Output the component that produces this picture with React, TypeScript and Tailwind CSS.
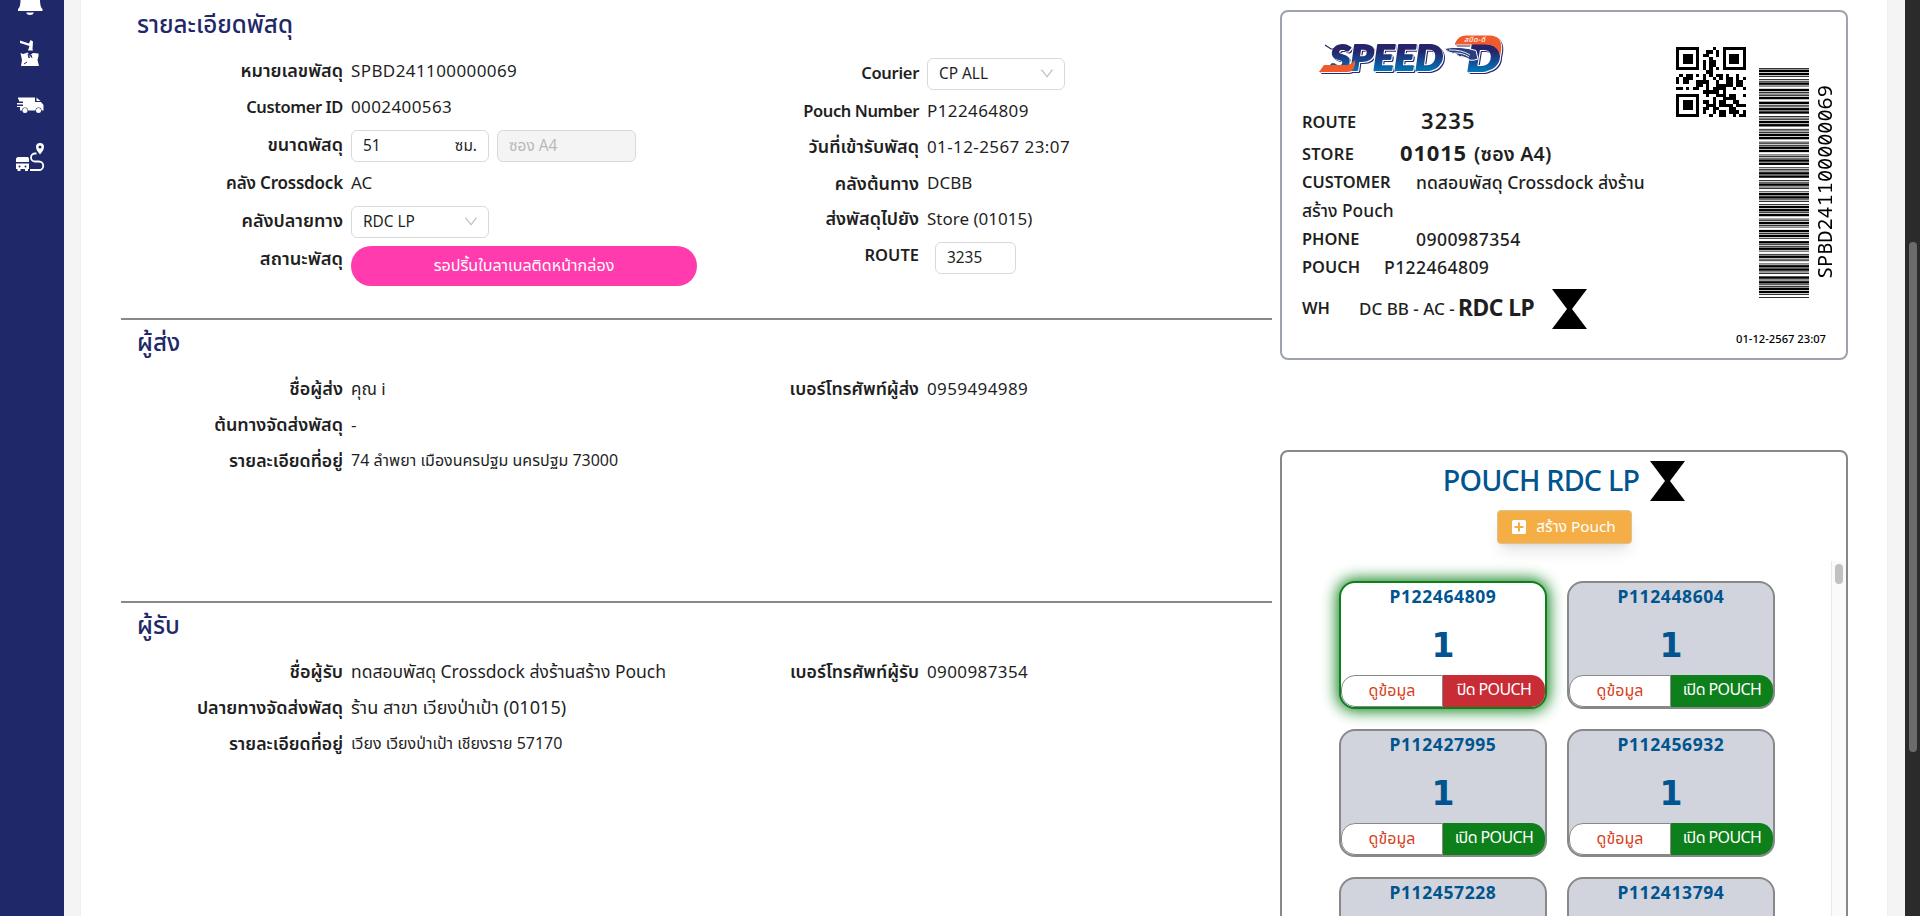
import React from "react";

const QR = [
  "#######....#..#######",
  "#.....#..##.#.#.....#",
  "#.###.#.##..#.#.###.#",
  "#.###.#...#...#.###.#",
  "#.###.#.#.##..#.###.#",
  "#.....#.#.##..#.....#",
  "#######.#.#.#.#######",
  ".........##..........",
  ".#.##.#.#.#.##.#..#..",
  "#.###...#..#.#.##.#.#",
  "#.##..####..#..##.##.",
  "......##.#..#####.##.",
  "##.#.##..#.####..#..#",
  "........#####.#......",
  "#######..#..###.##..#",
  "#.....#....#..####...",
  "#.###.#.##.#.##..##..",
  "#.###.#..###.####.###",
  "#.###.#.##.##...##...",
  "#.....#.#..#.##.###.#",
  "#######...#..##..#.##",
];

// Code 39: alternating bar / space, capital letter = wide element
const CODE39: Record<string, string> = {
  "*": "bWbwBwBwb", S: "bwBwbwBWb", P: "bwBwBwbWb", B: "bwBwbWbwB", D: "bwbwBWbwB",
  "0": "bwbWBwBwb", "1": "BwbWbwbwB", "2": "bwBWbwbwB", "4": "bwbWBwbwB", "6": "bwBWBwbwb", "9": "bwBWbwBwb",
};

function QrCode() {
  return (
    <svg width="70" height="70" viewBox="0 0 21 21" shapeRendering="crispEdges">
      {QR.flatMap((row, y) =>
        row.split("").map((c, x) => (c === "#" ? <rect key={`${x}-${y}`} x={x} y={y} width="1" height="1" /> : null)),
      )}
    </svg>
  );
}

function Barcode() {
  let pos = 0;
  const bars: React.ReactNode[] = [];
  for (const ch of "*SPBD241100000069*") {
    for (const e of CODE39[ch] + "w") {
      const w = e === "B" || e === "W" ? 3 : 1;
      if (e.toLowerCase() === "b") bars.push(<rect key={pos} x="0" y={287 - pos - w} width="50" height={w} />);
      pos += w;
    }
  }
  return (
    <svg width="50" height="230" viewBox="0 0 50 287" preserveAspectRatio="none">
      {bars}
    </svg>
  );
}

function Hourglass({ className = "" }: { className?: string }) {
  return (
    <svg width="35" height="40" viewBox="0 0 35 40" className={className}>
      <path d="M0 0H35L20 20L35 40H0L15 20Z" />
    </svg>
  );
}

function Chevron() {
  return (
    <svg width="12" height="9" viewBox="0 0 12 9" fill="none" stroke="#bfbfbf" strokeWidth="1.3">
      <path d="M0.5 0.7L6 7.8L11.5 0.7" />
    </svg>
  );
}

function Logo() {
  return (
    <svg width="192" height="46" viewBox="0 0 192 46" className="overflow-visible">
      <defs>
        <linearGradient id="blue" gradientUnits="userSpaceOnUse" x1="0" y1="12" x2="0" y2="38">
          <stop offset="0.2" stopColor="#26246b" />
          <stop offset="1" stopColor="#0079bd" />
        </linearGradient>
      </defs>
      <g className="[filter:drop-shadow(1.5px_1.5px_0_#fff)_drop-shadow(-1px_-1px_0_#fff)_drop-shadow(1.2px_1.4px_0_#2b2667)]">
        <g fontFamily="Lato" fontWeight="900" fontStyle="italic" stroke="url(#blue)" strokeWidth="1.8" strokeLinejoin="round" fill="url(#blue)">
          <text x="14" y="36" fontSize="35" textLength="113" lengthAdjust="spacingAndGlyphs">SPEED</text>
          <text x="151" y="36.500" fontSize="36" textLength="33" lengthAdjust="spacingAndGlyphs">D</text>
        </g>
        <path d="M3 38L8 31H30Q35 31 39 26Q40 38 31 38Z" fill="#f15a2b" />
        <path d="M139 9.500Q142 1.500 150 1.500H174Q187 2 185 17L184 22Q182 10.500 170 10.500H139Z" fill="#f15a2b" />
      </g>
      <path d="M9 11L15 15H24" fill="none" stroke="#2b2667" strokeWidth="1.2" />
      <text x="148" y="8" fontFamily="Noto Sans Thai, sans-serif" fontSize="7" fontStyle="italic" fill="#fff" textLength="21">สปีด-ดี</text>
      <path d="M128 14.500Q145 11.500 160 16.500L162 25Q154 28 150 24Q142 23 140 20Q132 19 128 14.500Z" fill="#2c3f7d" stroke="#fff" strokeWidth="1" />
      <path d="M133 16Q146 15.500 154 21M138 19Q147 18.500 153 23M145 22L153 25" fill="none" stroke="#fff" strokeWidth="0.9" />
    </svg>
  );
}

function Sidebar() {
  return (
    <aside className="w-16 shrink-0 bg-[#1f2868]">
      <svg width="64" height="180" viewBox="0 0 64 180" fill="#fff">
        <path d="M20 0H40Q40 7 42.500 9V11H18V9Q20.500 7 20.500 0Z" />
        <path d="M26 12.500H34Q33 15 30 15T26 12.500Z" />
        <path d="M20 40.500L29 43.500L30.500 40L33 41.500L32.500 49L33 50.500H28L29.500 46L20 43Z" />
        <path d="M20.500 53L23 54L28 52.500L29 56L33 53L38.500 53.500V56L37.500 60L39 66H21L22 60Z" />
        <path d="M28 54L29 58L31 55L32 58" fill="none" stroke="#1f2868" />
        <path d="M24 64L27 62" stroke="#1f2868" />
        <path d="M18 97.500H35V102H41L43.500 105V110.500H41.500A3 3 0 0 0 35.500 110.500H28A3 3 0 0 0 22 110.500H20V107H17V106H23V104.500H17V103H23V101.500H19V99.500H18Z" />
        <path d="M36.500 97.500L40.500 101H36.500Z" />
        <circle cx="25" cy="110.500" r="2.500" />
        <circle cx="38.500" cy="110.500" r="2.500" />
        <path d="M17.500 157H28L29 158.500V162H16V158.500ZM16 163.500H29V169H28V171H25V169H20.500V171H17.500V169H16Z" />
        <circle cx="19.500" cy="166.500" r="1" fill="#1f2868" />
        <circle cx="25.500" cy="166.500" r="1" fill="#1f2868" />
        <path d="M36.500 153.500H35A4 4 0 0 0 35 161.500H39A4 4 0 0 1 39 170H30" fill="none" stroke="#fff" strokeWidth="1.800" />
        <path fillRule="evenodd" d="M40 143A4 4 0 0 1 44 147Q44 150 40 154.500Q36 150 36 147A4 4 0 0 1 40 143ZM40 145.500A1.500 1.500 0 1 0 40 148.500A1.500 1.500 0 1 0 40 145.500Z" />
      </svg>
    </aside>
  );
}

interface RowProps {
  label: string;
  h: string;
  children: React.ReactNode;
  wide?: boolean;
  labelClass?: string;
}

function Row({ label, h, children, wide = false, labelClass = "pb-px text-[17.7px]" }: RowProps) {
  return (
    <div className={`flex items-center gap-2 ${h}`}>
      <div className={`${wide ? "w-[215px]" : "w-[222px]"} ${labelClass} shrink-0 text-right font-semibold whitespace-nowrap`}>{label}</div>
      <div className="flex items-center gap-2 text-[17px] whitespace-nowrap">{children}</div>
    </div>
  );
}

const latinLabel = "text-[16.5px] tracking-[-0.4px]";
const thaiLabel = "pb-0.5 text-[18px]";

function Num({ children }: { children: React.ReactNode }) {
  return <span className="tracking-[0.4px]">{children}</span>;
}

const box = "flex h-8 items-center justify-between rounded-md border border-[#d9d9d9] px-[11px] pb-px text-[15.4px]";

function Heading({ children }: { children: React.ReactNode }) {
  return <h2 className="h-9 pl-4 text-[24.2px] leading-[34px] font-medium text-[#1f2868]">{children}</h2>;
}

function Pouch({ id, active = false }: { id: string; active?: boolean }) {
  return (
    <div
      className={`flex h-32 flex-col items-center rounded-2xl border-2 text-[#00548f] ${
        active ? "border-[#0d801b] bg-white shadow-[0_0_15px_2px_#0d801b]" : "border-[#888] bg-[#d1d4dc]"
      }`}
    >
      <div className="h-7 text-[17.5px] leading-[27px] font-bold tracking-[0.6px]">{id}</div>
      <div className="min-h-0 flex-1 font-['DejaVu_Sans'] text-[33px] leading-[70px] font-bold">1</div>
      <div className="flex h-8 w-full shrink-0 text-base leading-[29px] whitespace-nowrap">
        <div className="w-1/2 rounded-l-[14px] border border-[#888] bg-white text-center leading-[28px] text-[#d6401a]">ดูข้อมูล</div>
        <div className={`w-1/2 rounded-r-[14px] text-center tracking-[-0.6px] text-white ${active ? "bg-[#c82d36]" : "bg-[#0d801b]"}`}>
          {active ? "ปิด POUCH" : "เปิด POUCH"}
        </div>
      </div>
    </div>
  );
}

function LabelCard() {
  return (
    <section className="flex h-[350px] rounded-lg border-2 border-[#9ca3af] text-[17.6px] font-medium whitespace-nowrap">
      <div className="w-[390px] pt-[22px] pl-5">
        <div className="h-[71px] pl-3.5">
          <Logo />
        </div>
        <div className="flex h-[34px] items-center">
          <span className="w-[119px] pt-px text-[16.4px] font-semibold">ROUTE</span>
          <span className="pb-[3px] text-[22px] font-semibold tracking-[1.1px]">3235</span>
        </div>
        <div className="flex h-[29px] items-center">
          <span className="w-[98px] pt-px text-[16.4px] font-semibold tracking-[0.3px]">STORE</span>
          <span className="pb-0.5 text-[22px] font-bold tracking-[0.8px]">01015</span>
          <span className="pl-[7px] text-[19.6px] font-semibold tracking-[0.2px]">(ซอง A4)</span>
        </div>
        <div className="flex h-7 items-center">
          <span className="w-[114px] text-[16.4px] font-semibold">CUSTOMER</span>
          <span>ทดสอบพัสดุ Crossdock ส่งร้าน</span>
        </div>
        <div className="h-7 text-[17.4px] leading-[29px]">สร้าง Pouch</div>
        <div className="flex h-7 items-center pt-0.5">
          <span className="w-[114px] text-[16.4px] font-semibold">PHONE</span>
          <Num>0900987354</Num>
        </div>
        <div className="flex h-7 items-center pt-0.5">
          <span className="w-[82px] text-[16.4px] font-semibold">POUCH</span>
          <Num>P122464809</Num>
        </div>
        <div className="flex h-[57px] items-center">
          <span className="w-[57px] text-[16.4px] font-semibold">WH</span>
          <span className="w-[95px] text-[17px]">DC BB - AC -</span>
          <span className="pl-1 text-[22.8px] font-bold tracking-[-0.5px]">RDC LP</span>
          <Hourglass className="ml-[18px]" />
        </div>
      </div>
      <div className="flex flex-1 flex-col items-end">
        <div className="flex h-[315px] gap-[13px] pr-[9px]">
          <div className="pt-[35px]"><QrCode /></div>
          <div className="pt-[56px]"><Barcode /></div>
          <div className="-ml-[11px] flex w-[26px] rotate-180 items-center justify-center pb-[26px] font-['Noto_Sans_Mono','DejaVu_Sans_Mono',monospace] text-[20.2px] font-normal text-black [writing-mode:vertical-rl]">
            SPBD241100000069
          </div>
        </div>
        <div className="pr-5 text-[11.2px] leading-6 text-black">01-12-2567 23:07</div>
      </div>
    </section>
  );
}

export default function App() {
  return (
    <div className="flex h-[916px] w-[1920px] overflow-hidden bg-[#f4f4f4] font-['Noto_Sans','Noto_Sans_Thai',sans-serif] text-[#1f1f1f]">
      <Sidebar />
      <main className="ml-[16px] flex w-[1808px] shrink-0 border-x border-[#efefef] bg-white pl-[40px]">
        <div className="w-[1151px] shrink-0">
          <div className="h-[318px] pt-[7px]">
            <Heading>รายละเอียดพัสดุ</Heading>
            <div className="mt-2.5 flex">
              <div className="w-[583px]">
                <Row label="หมายเลขพัสดุ" h="h-9" labelClass={thaiLabel}><Num>SPBD241100000069</Num></Row>
                <Row label="Customer ID" h="h-9" labelClass={latinLabel}><Num>0002400563</Num></Row>
                <Row label="ขนาดพัสดุ" h="h-[42px]" labelClass="pb-[3px] text-[18px]">
                  <div className={`${box} w-[138px]`}><span>51</span><span>ซม.</span></div>
                  <div className={`${box} w-[139px] bg-[#f4f4f4] text-[#b8b8b8]`}>ซอง A4</div>
                </Row>
                <Row label="คลัง Crossdock" h="h-8" labelClass="text-[17px] tracking-[-0.2px]">AC</Row>
                <Row label="คลังปลายทาง" h="h-[46px]" labelClass="pb-[3px] text-[18px]">
                  <div className={`${box} w-[138px]`}><span>RDC LP</span><Chevron /></div>
                </Row>
                <Row label="สถานะพัสดุ" h="h-[42px]" labelClass="pb-4 text-[18.300px]">
                  <div className="h-10 w-[346px] rounded-full bg-[#ff3bad] text-center text-[16.1px] leading-[38px] text-white">รอปริ้นใบลาเบลติดหน้ากล่อง</div>
                </Row>
              </div>
              <div>
                <Row wide label="Courier" h="h-[42px]" labelClass="pb-0.5 text-[16.5px] tracking-[-0.3px]">
                  <div className={`${box} w-[138px]`}><span>CP ALL</span><Chevron /></div>
                </Row>
                <Row wide label="Pouch Number" h="h-8" labelClass={latinLabel}><Num>P122464809</Num></Row>
                <Row wide label="วันที่เข้ารับพัสดุ" h="h-10" labelClass="pb-px text-[18px]"><Num>01-12-2567 23:07</Num></Row>
                <Row wide label="คลังต้นทาง" h="h-8" labelClass="text-[18px]">DCBB</Row>
                <Row wide label="ส่งพัสดุไปยัง" h="h-10" labelClass="pb-px text-[18px]">Store (01015)</Row>
                <Row wide label="ROUTE" h="h-8" labelClass="text-[16.5px]">
                  <div className={`${box} mt-1.5 ml-2 w-[81px]`}>3235</div>
                </Row>
              </div>
            </div>
          </div>
          <div className="h-[283px] border-t-2 border-[#888] pt-[5px]">
            <Heading>ผู้ส่ง</Heading>
            <div className="mt-2.5 flex">
              <div className="w-[583px]">
                <Row label="ชื่อผู้ส่ง" h="h-9" labelClass={thaiLabel}>คุณ i</Row>
                <Row label="ต้นทางจัดส่งพัสดุ" h="h-9" labelClass={thaiLabel}>-</Row>
                <Row label="รายละเอียดที่อยู่" h="h-[35px]"><span className="pb-0.5 text-[16px]">74 ลำพยา เมืองนครปฐม นครปฐม 73000</span></Row>
              </div>
              <Row wide label="เบอร์โทรศัพท์ผู้ส่ง" h="h-9"><Num>0959494989</Num></Row>
            </div>
          </div>
          <div className="border-t-2 border-[#888] pt-[5px]">
            <Heading>ผู้รับ</Heading>
            <div className="mt-2.5 flex">
              <div className="w-[583px]">
                <Row label="ชื่อผู้รับ" h="h-9" labelClass={thaiLabel}><span className="pb-px text-[17.5px]">ทดสอบพัสดุ Crossdock ส่งร้านสร้าง Pouch</span></Row>
                <Row label="ปลายทางจัดส่งพัสดุ" h="h-9" labelClass={thaiLabel}><span className="text-[18.100px]">ร้าน สาขา เวียงป่าเป้า (01015)</span></Row>
                <Row label="รายละเอียดที่อยู่" h="h-[35px]"><span className="pb-0.5 text-[16px]">เวียง เวียงป่าเป้า เชียงราย 57170</span></Row>
              </div>
              <Row wide label="เบอร์โทรศัพท์ผู้รับ" h="h-9"><Num>0900987354</Num></Row>
            </div>
          </div>
        </div>
        <div className="ml-2 w-[568px] shrink-0 pt-2.5">
          <LabelCard />
          <section className="mt-[90px] flex h-[500px] flex-col rounded-lg border-2 border-[#888]">
            <div className="flex h-[58px] shrink-0 items-center justify-center gap-[11px]">
              <h1 className="pb-[3px] text-[28.7px] font-medium tracking-[-0.8px] text-[#00548f]">POUCH RDC LP</h1>
              <Hourglass />
            </div>
            <div className="flex h-[51px] shrink-0 justify-center">
              <button className="flex h-[34px] w-[135px] items-center justify-center gap-2.5 rounded border border-[#dcc193] bg-[#f5ae45] pb-0.5 text-[15.3px] text-white shadow-lg">
                <svg width="14" height="14" viewBox="0 0 14 14" className="translate-y-px">
                  <rect width="14" height="14" rx="1.500" fill="#fff" />
                  <path d="M7 2.500V11.500M2.500 7H11.500" stroke="#f5ae45" strokeWidth="2" />
                </svg>
                สร้าง Pouch
              </button>
            </div>
            <div className="flex min-h-0 flex-1">
              <div className="grid w-[549px] grid-cols-[208px_208px] content-start gap-x-5 gap-y-5 pt-5 pl-[57px]">
                <Pouch id="P122464809" active />
                <Pouch id="P112448604" />
                <Pouch id="P112427995" />
                <Pouch id="P112456932" />
                <Pouch id="P112457228" />
                <Pouch id="P112413794" />
              </div>
              <div className="w-[15px] border-l border-[#e8e8e8] bg-[#fafafa] pt-[3px] pl-[3px]">
                <div className="h-5 w-2 rounded-full bg-[#c1c1c1]" />
              </div>
            </div>
          </section>
        </div>
      </main>
      <div className="ml-[17px] flex-1 bg-[#2b2b2b] pt-[242px] pl-1">
        <div className="h-[510px] w-2 rounded-full bg-[#6b6b6b]" />
      </div>
    </div>
  );
}
